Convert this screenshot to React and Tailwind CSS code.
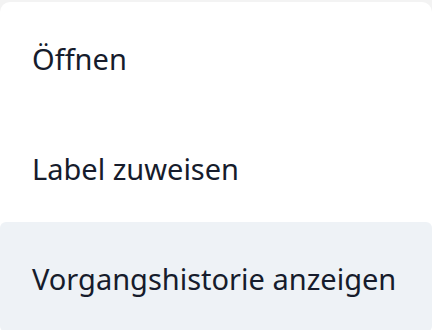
const items = ["Öffnen", "Label zuweisen", "Vorgangshistorie anzeigen"];

export default function App() {
  return (
    <div className="h-[330px] w-[432px] overflow-hidden bg-[#f3f3f3] pt-[2px]">
      <div
        className="rounded-t-[10px] bg-white"
        style={{ fontFamily: '"Noto Sans", "Open Sans", sans-serif' }}
      >
        {items.map((label, index) => (
          <div
            key={label}
            className={
              index === 2
                ? "flex h-[110px] items-center rounded-[6px] bg-[#eef2f6] pl-[32px] pt-[4px] text-[29px] text-[#161c2c]"
                : "flex h-[110px] items-center pl-[32px] pt-[4px] text-[29px] text-[#161c2c]"
            }
          >
            {label}
          </div>
        ))}
      </div>
    </div>
  );
}
